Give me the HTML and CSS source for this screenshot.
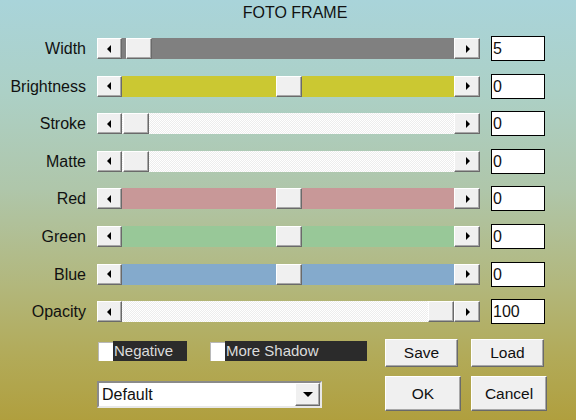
FILE: index.html
```html
<!DOCTYPE html>
<html>
<head>
<meta charset="utf-8">
<link rel="stylesheet" href="styles.css">
</head>
<body>
<div class="dialog">
  <div class="title">FOTO FRAME</div>
  <div class="rows">
    <div class="lbl">Width</div>
    <div class="sb"><span class="btn3d sbtn"><i class="tri-l"></i></span><div class="track t-gray"><span class="btn3d thumb" style="margin-left:4px"></span></div><span class="btn3d sbtn r"><i class="tri-r"></i></span></div>
    <div class="val">5</div>

    <div class="lbl">Brightness</div>
    <div class="sb"><span class="btn3d sbtn"><i class="tri-l"></i></span><div class="track t-yellow"><span class="btn3d thumb" style="margin-left:154px"></span></div><span class="btn3d sbtn r"><i class="tri-r"></i></span></div>
    <div class="val">0</div>

    <div class="lbl">Stroke</div>
    <div class="sb"><span class="btn3d sbtn"><i class="tri-l"></i></span><div class="track t-white"><span class="btn3d thumb" style="margin-left:1px"></span></div><span class="btn3d sbtn r"><i class="tri-r"></i></span></div>
    <div class="val">0</div>

    <div class="lbl">Matte</div>
    <div class="sb"><span class="btn3d sbtn"><i class="tri-l"></i></span><div class="track t-white"><span class="btn3d thumb" style="margin-left:1px"></span></div><span class="btn3d sbtn r"><i class="tri-r"></i></span></div>
    <div class="val">0</div>

    <div class="lbl">Red</div>
    <div class="sb"><span class="btn3d sbtn"><i class="tri-l"></i></span><div class="track t-red"><span class="btn3d thumb" style="margin-left:154px"></span></div><span class="btn3d sbtn r"><i class="tri-r"></i></span></div>
    <div class="val">0</div>

    <div class="lbl">Green</div>
    <div class="sb"><span class="btn3d sbtn"><i class="tri-l"></i></span><div class="track t-green"><span class="btn3d thumb" style="margin-left:154px"></span></div><span class="btn3d sbtn r"><i class="tri-r"></i></span></div>
    <div class="val">0</div>

    <div class="lbl">Blue</div>
    <div class="sb"><span class="btn3d sbtn"><i class="tri-l"></i></span><div class="track t-blue"><span class="btn3d thumb" style="margin-left:154px"></span></div><span class="btn3d sbtn r"><i class="tri-r"></i></span></div>
    <div class="val">0</div>

    <div class="lbl">Opacity</div>
    <div class="sb"><span class="btn3d sbtn"><i class="tri-l"></i></span><div class="track t-white"><span class="btn3d thumb" style="margin-left:306px"></span></div><span class="btn3d sbtn r"><i class="tri-r"></i></span></div>
    <div class="val">100</div>
  </div>

  <div class="bottom">
    <div class="left">
      <div class="checks">
        <div class="chk"><span class="box"></span><span class="ctext neg">Negative</span></div>
        <div class="chk"><span class="box"></span><span class="ctext shadow">More Shadow</span></div>
      </div>
      <div class="combo"><span class="ctxt">Default</span><span class="btn3d cbtn"><i class="tri-d"></i></span></div>
    </div>
    <div class="buttons">
      <div class="btn3d pb small">Save</div>
      <div class="btn3d pb small">Load</div>
      <div class="btn3d pb">OK</div>
      <div class="btn3d pb">Cancel</div>
    </div>
  </div>
</div>
</body>
</html>
```
FILE: styles.css
```css
* { box-sizing: border-box; }
html, body { margin: 0; padding: 0; }
body {
  width: 576px;
  height: 420px;
  overflow: hidden;
  font-family: "Liberation Sans", Arial, sans-serif;
  color: #000;
  background: linear-gradient(to bottom, #a9d4da 0%, #acd0c6 22%, #afc6aa 45%, #b2b77c 68%, #b2ab5a 84%, #b09f3e 100%);
}
.dialog { width: 576px; height: 420px; }
.title {
  padding-top: 4px;
  padding-left: 14px;
  text-align: center;
  font-size: 16px;
  line-height: 18px;
  color: #111;
}
.rows {
  margin-top: 14px;
  display: grid;
  grid-template-columns: 97px 394px 54px;
  grid-auto-rows: 25px;
  row-gap: 12.6px;
  align-items: center;
}
.lbl {
  font-size: 16px;
  line-height: 25px;
  text-align: right;
  padding-right: 11px;
  color: #111;
}
.sb {
  width: 383px;
  height: 21px;
  display: flex;
}
.btn3d {
  background: #f0f0f0;
  border: 1px solid;
  border-color: #ffffff #6a6a6a #6a6a6a #ffffff;
  box-shadow: inset -1px -1px 0 #a8a8a8;
}
.sbtn {
  width: 25px;
  height: 21px;
  flex: none;
  display: flex;
  align-items: center;
  justify-content: center;
}
.sbtn.r { width: 26px; }
.tri-l {
  width: 0; height: 0;
  border-top: 4px solid transparent;
  border-bottom: 4px solid transparent;
  border-right: 4px solid #000;
  margin-right: 2px;
}
.tri-r {
  width: 0; height: 0;
  border-top: 4px solid transparent;
  border-bottom: 4px solid transparent;
  border-left: 4px solid #000;
  margin-left: 1px;
}
.tri-d {
  width: 0; height: 0;
  border-left: 5px solid transparent;
  border-right: 5px solid transparent;
  border-top: 5px solid #000;
}
.track {
  flex: 1;
  height: 21px;
  display: flex;
}
.thumb {
  width: 26px;
  height: 21px;
  flex: none;
}
.t-gray { background: #808080; }
.t-yellow { background: #cbc832; }
.t-red { background: #c89898; }
.t-green { background: #98c898; }
.t-blue { background: #84aacc; }
.t-white { background: repeating-conic-gradient(#ffffff 0 25%, #ededed 0 50%) 0 0 / 2px 2px; }
.val {
  width: 54px;
  height: 25px;
  background: #fff;
  border: 1px solid #000;
  font-size: 16px;
  line-height: 23px;
  padding-left: 1px;
  color: #111;
}
.bottom {
  margin-top: 15px;
  padding-left: 97px;
  display: flex;
}
.left { width: 288px; }
.checks {
  margin-top: 2px;
  height: 20px;
  display: flex;
  gap: 23px;
  padding-left: 1px;
}
.chk { display: flex; height: 20px; }
.box {
  width: 15px;
  height: 19px;
  margin-top: 1px;
  background: #fff;
  border-top: 1px solid #b8b8b8;
  border-left: 1px solid #b8b8b8;
}
.ctext {
  background: #2b2b2b;
  color: #dcdcdc;
  font-size: 15px;
  line-height: 20px;
  padding-left: 1px;
}
.ctext.neg { width: 74px; }
.ctext.shadow { width: 142px; }
.combo {
  margin-top: 20px;
  width: 225px;
  height: 27px;
  background: #fff;
  border: 2px solid;
  border-color: #8a8a8a #e8e8e8 #e8e8e8 #8a8a8a;
  display: flex;
  justify-content: space-between;
}
.ctxt {
  font-size: 16px;
  line-height: 23px;
  padding-left: 3px;
  color: #111;
}
.cbtn {
  width: 25px;
  height: 23px;
  display: flex;
  align-items: center;
  justify-content: center;
}
.buttons {
  display: grid;
  grid-template-columns: 76px 76px;
  grid-template-rows: 28px 35px;
  column-gap: 10px;
  row-gap: 9px;
}
.pb {
  font-size: 15.5px;
  display: flex;
  align-items: center;
  justify-content: center;
  color: #111;
}
.pb.small { width: 73px; }
```
